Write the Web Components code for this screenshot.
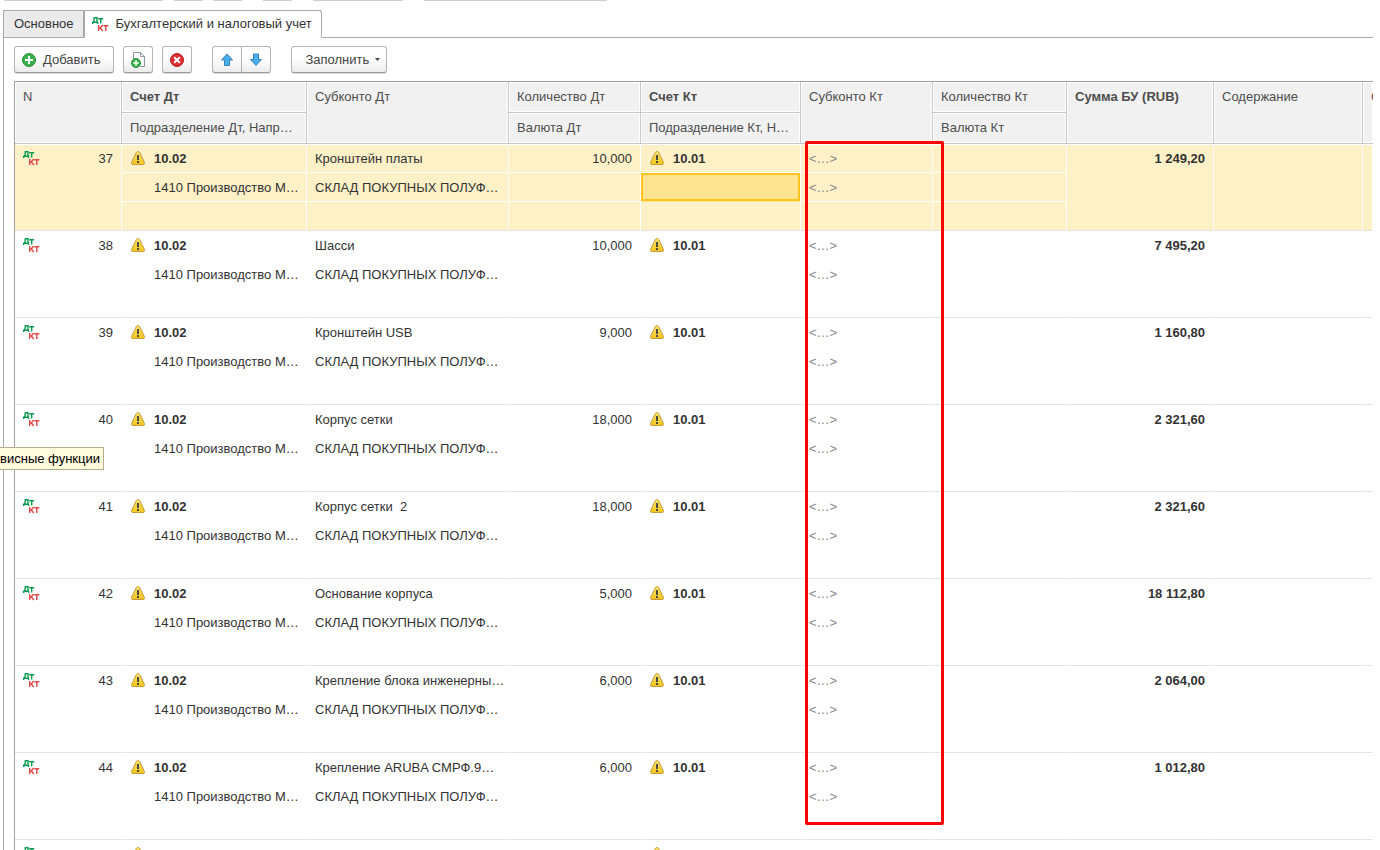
<!DOCTYPE html>
<html lang="ru">
<head>
<meta charset="utf-8">
<title>Бухгалтерский и налоговый учет</title>
<style>
  body {
    margin: 0;
    height: 100vh;
    overflow: hidden;
    background: #fff;
    color: #333;
    font: 13px/16px "Liberation Sans", Arial, sans-serif;
  }
</style>
</head>
<body>
<entry-window></entry-window>

<script>
class DtktIcon extends HTMLElement {
  constructor() {
    super();
    this.attachShadow({ mode: 'open' }).innerHTML = `
      <style>
        :host { display: block; width: 17px; height: 16px; white-space: normal; }
        svg { display: block; }
        path { fill: none; stroke-width: 1.4; }
        .dt { stroke: #0a9a50; }
        .kt { stroke: #e04848; }
      </style>
      <svg width="17" height="16" viewBox="0 0 17 16" aria-hidden="true">
        <path class="dt" d="M.7 8V6.3H5.6V8M1.5 6.3C2.2 5 2.3 3.5 2.3 1.7H5V6.3M6.2 2.7H11.2M8.7 2.7V7.5"/>
        <path class="kt" d="M6.7 9V15M7 12H8.3L10.6 9M8.3 12L10.8 15M11.3 9.7H16.3M13.8 9.7V15"/>
      </svg>`;
  }
}
customElements.define("dtkt-icon", DtktIcon);

class WarningIcon extends HTMLElement {
  constructor() {
    super();
    this.attachShadow({ mode: 'open' }).innerHTML = `
      <style>
        :host { display: block; width: 16px; height: 16px; white-space: normal; }
        svg { display: block; }
      </style>
      <svg width="16" height="16" viewBox="0 0 16 16" aria-hidden="true">
        <defs>
          <linearGradient id="g" x1="0" y1="0" x2="0" y2="1">
            <stop offset="0" stop-color="#fbe36a"/>
            <stop offset="1" stop-color="#f3c51d"/>
          </linearGradient>
        </defs>
        <path d="M8 1.5C9 1.5 9.500 2.1 9.900 3L14.300 12.200C14.900 13.700 14.300 14.500 13 14.500H3C1.700 14.500 1.100 13.700 1.700 12.200L6.100 3C6.500 2.100 7 1.500 8 1.500Z" fill="url(#g)" stroke="#c79a3c"/>
        <path d="M7 5H9V10H7ZM7 11H9V13H7Z" fill="#4a4a44"/>
      </svg>`;
  }
}
customElements.define("warning-icon", WarningIcon);

class ToolButton extends HTMLElement {
  constructor() {
    super();
    this.attachShadow({ mode: 'open' }).innerHTML = `
      <style>
        :host { display: block; }
        button {
          display: flex;
          align-items: center;
          justify-content: center;
          gap: 6px;
          height: 27px;
          min-width: 30px;
          padding: 0 6px;
          box-sizing: border-box;
          border: 1px solid #b4b4b4;
          border-bottom-color: #999;
          border-radius: var(--radius, 3px);
          background: linear-gradient(#fff 45%, #ececec);
          box-shadow: 0 1px 0 #dcdcdc;
          color: #444;
          font: inherit;
          white-space: nowrap;
        }
        :host([wide]) button { padding: 0 13px 0 6px; }
        :host([menu]) button { padding: 0 6px 0 13px; }
      </style>
      <button type="button"><slot></slot></button>`;
  }

  connectedCallback() {
    const label = this.getAttribute("label")
    if (label) this.shadowRoot.querySelector("button").setAttribute("aria-label", label)
  }
}
customElements.define("tool-button", ToolButton);

class TabBar extends HTMLElement {
  constructor() {
    super();
    this.attachShadow({ mode: 'open' }).innerHTML = `
      <style>
        :host {
          display: flex;
          height: 28px;
          box-sizing: border-box;
          box-shadow: inset 0 -1px 0 #aaa;
        }
        button {
          display: flex;
          align-items: center;
          gap: 7px;
          box-sizing: border-box;
          padding: 0 9px 0 10px;
          border: 1px solid #aaa;
          background: #ebebeb;
          color: #333;
          font: inherit;
          white-space: nowrap;
        }
        button:first-child { border-right: 0; border-radius: 3px 0 0 0; }
        button[aria-selected="true"] {
          padding-left: 7px;
          border-bottom-color: #fff;
          border-radius: 0 3px 0 0;
          background: #fff;
        }
      </style>
      <button type="button" role="tab">Основное</button>
      <button type="button" role="tab" aria-selected="true"><dtkt-icon></dtkt-icon>Бухгалтерский и налоговый учет</button>`;
  }

  connectedCallback() {
    this.setAttribute("role", "tablist")
  }
}
customElements.define("tab-bar", TabBar);

class EntryToolbar extends HTMLElement {
  constructor() {
    super();
    this.attachShadow({ mode: 'open' }).innerHTML = `
      <style>
        :host { display: flex; gap: 9px; padding: 8px 10px; }
        .pair { display: flex; margin: 0 11px; }
        .pair tool-button:first-child { --radius: 3px 0 0 3px; margin-right: -1px; }
        .pair tool-button:last-child { --radius: 0 3px 3px 0; }
        svg { display: block; flex: none; }
      </style>
      <tool-button wide>
        <svg width="16" height="16" viewBox="0 0 16 16" aria-hidden="true">
          <circle cx="8" cy="8" r="6.5" fill="#3db04b" stroke="#23903a"/>
          <path d="M8 4V12M4 8H12" stroke="#fff" stroke-width="2"/>
        </svg>
        Добавить
      </tool-button>
      <tool-button label="Добавить копированием">
        <svg width="16" height="16" viewBox="0 0 16 16" aria-hidden="true">
          <path d="M3.5 7V.5H10.5L14.5 4.5V14.5H10M10.5 .5V4.5H14.5" fill="#fff" stroke="#8a98a5"/>
          <circle cx="6" cy="11" r="4.5" fill="#3db04b" stroke="#23903a"/>
          <path d="M6 8.3V13.7M3.3 11H8.7" stroke="#fff" stroke-width="1.5"/>
        </svg>
      </tool-button>
      <tool-button label="Удалить">
        <svg width="16" height="16" viewBox="0 0 16 16" aria-hidden="true">
          <circle cx="8" cy="8" r="6.5" fill="#dc2f35" stroke="#bb1c22"/>
          <path d="M5.2 5.2L10.8 10.8M10.8 5.2L5.2 10.8" stroke="#fff" stroke-width="2"/>
        </svg>
      </tool-button>
      <div class="pair">
        <tool-button label="Переместить вверх">
          <svg width="16" height="16" viewBox="0 0 16 16" aria-hidden="true">
            <path d="M8 2L13.5 8H10.5V13.5H5.5V8H2.5Z" fill="#45b0ee" stroke="#3b82b4"/>
          </svg>
        </tool-button>
        <tool-button label="Переместить вниз">
          <svg width="16" height="16" viewBox="0 0 16 16" aria-hidden="true">
            <path d="M8 13.5L13.5 7.5H10.5V2H5.5V7.5H2.5Z" fill="#45b0ee" stroke="#3b82b4"/>
          </svg>
        </tool-button>
      </div>
      <tool-button menu>
        Заполнить
        <svg width="5" height="3" viewBox="0 0 5 3" aria-hidden="true"><path d="M0 0H5L2.5 3Z" fill="#444"/></svg>
      </tool-button>`;
  }
}
customElements.define("entry-toolbar", EntryToolbar);

class EntryTable extends HTMLElement {
  #shadow;
  #data;

  constructor() {
    super();
    this.#shadow = this.attachShadow({ mode: 'open' });
    this.#data = [];
    this.render()
  }

  set data(value) {
    this.#data = structuredClone(value)
    this.render()
  }

  get data() {
    return this.#data
  }

  entry(row) {
    return `
      <tbody class="${row.selected ? "selected" : ""}">
        <tr>
          <td rowspan="3"><div class="number"><dtkt-icon></dtkt-icon><span>${row.n}</span></div></td>
          <td><div class="account"><warning-icon></warning-icon><b>10.02</b></div></td>
          <td>${row.name}</td>
          <td class="right">${row.count}</td>
          <td><div class="account"><warning-icon></warning-icon><b>10.01</b></div></td>
          <td class="empty">&lt;…&gt;</td>
          <td></td>
          <td rowspan="3" class="right"><b>${row.sum}</b></td>
          <td rowspan="3"></td>
          <td rowspan="3"></td>
        </tr>
        <tr>
          <td class="sub">1410 Производство М…</td>
          <td>СКЛАД ПОКУПНЫХ ПОЛУФ…</td>
          <td></td>
          <td class="${row.selected ? "current" : ""}"></td>
          <td class="empty">&lt;…&gt;</td>
          <td></td>
        </tr>
        <tr><td></td><td></td><td></td><td></td><td></td><td></td></tr>
      </tbody>`
  }

  render() {
    this.#shadow.innerHTML = `
      <style>
        :host { display: block; position: relative; border: solid #a0a0a0; border-width: 1px 0 0 1px; }
        table {
          width: 100%;
          table-layout: fixed;
          border-collapse: separate;
          border-spacing: 0;
        }
        th, td {
          box-sizing: border-box;
          padding: 7px 8px 5px;
          overflow: hidden;
          text-align: left;
          vertical-align: top;
          white-space: pre;
        }
        th {
          height: 31px;
          border: solid #c8c8c8;
          border-width: 0 1px 1px 0;
          background: #f1f1f1;
          box-shadow: inset 0 0 0 1px #fff;
          color: #4d4d4d;
          font-weight: normal;
        }
        th.key { font-weight: bold; }
        th.last { border-right: 0; padding-right: 0; }
        td { height: 29px; border: solid transparent; border-width: 0 1px 1px 0; }
        td[rowspan], tr:last-child td { border-bottom-color: #e4e4e4; }
        .selected td {
          border-right-color: #fff;
          background: #fef1c7;
          background-clip: padding-box;
        }
        .selected tr:first-child td { box-shadow: inset 0 1px 0 #fff; }
        .selected .current {
          background: #fee491;
          box-shadow: inset 0 0 0 2px #fdc41f;
        }
        .right { text-align: right; }
        .sub { padding-left: 32px; }
        .empty { color: #888; }
        .number { display: flex; justify-content: space-between; }
        .account { display: flex; gap: 8px; }
        dtkt-icon, warning-icon { margin-top: -1px; }
        .mark {
          position: absolute;
          top: 59px;
          left: 790px;
          width: 139px;
          height: 684px;
          box-sizing: border-box;
          border: 3px solid #f00;
          border-radius: 2px;
        }
      </style>
      <table>
        <colgroup>
          <col style="width:107px"><col style="width:185px"><col style="width:202px">
          <col style="width:132px"><col style="width:160px"><col style="width:132px">
          <col style="width:134px"><col style="width:147px"><col style="width:149px"><col>
        </colgroup>
        <thead>
          <tr>
            <th rowspan="2">N</th>
            <th class="key">Счет Дт</th>
            <th rowspan="2">Субконто Дт</th>
            <th>Количество Дт</th>
            <th class="key">Счет Кт</th>
            <th rowspan="2">Субконто Кт</th>
            <th>Количество Кт</th>
            <th rowspan="2" class="key">Сумма БУ (RUB)</th>
            <th rowspan="2">Содержание</th>
            <th rowspan="2" class="last">С</th>
          </tr>
          <tr>
            <th>Подразделение Дт, Напр…</th>
            <th>Валюта Дт</th>
            <th>Подразделение Кт, Н…</th>
            <th>Валюта Кт</th>
          </tr>
        </thead>
        ${this.#data.map(row => this.entry(row)).join("")}
      </table>
      <div class="mark"></div>`;
  }
}
customElements.define("entry-table", EntryTable);

class HintBox extends HTMLElement {
  constructor() {
    super();
    this.attachShadow({ mode: 'open' }).innerHTML = `
      <style>
        :host {
          display: block;
          box-sizing: border-box;
          padding: 3px 3px 2px;
          border: 1px solid #b5ad8b;
          background: #fffbdc;
          color: #000;
          white-space: nowrap;
        }
      </style>
      <slot></slot>`;
  }

  connectedCallback() {
    this.setAttribute("role", "tooltip")
  }
}
customElements.define("hint-box", HintBox);

class EntryWindow extends HTMLElement {
  constructor() {
    super();
    this.attachShadow({ mode: 'open' }).innerHTML = `
      <style>
        :host { display: block; position: relative; height: 100vh; overflow: hidden; }
        .commands { display: flex; height: 1px; margin-bottom: 9px; padding-left: 4px; }
        .commands i { background: #cfcfcf; }
        main { margin: 0 7px 0 3px; }
        .page { border-left: 1px solid #aaa; }
        entry-table { margin-left: 10px; }
        hint-box { position: absolute; top: 447px; right: calc(100% - 104px); }
      </style>
      <div class="commands">
        <i style="width:159px"></i>
        <i style="width:29px;margin-left:11px"></i>
        <i style="width:29px;margin-left:10px"></i>
        <i style="width:29px;margin-left:21px"></i>
        <i style="width:90px;margin-left:21px"></i>
        <i style="width:183px;margin-left:21px"></i>
      </div>
      <main>
        <tab-bar></tab-bar>
        <div class="page">
          <entry-toolbar></entry-toolbar>
          <entry-table></entry-table>
        </div>
      </main>
      <hint-box>Сервисные функции</hint-box>`;
    this.shadowRoot.querySelector("entry-table").data = [
      { n: 37, name: "Кронштейн платы", count: "10,000", sum: "1 249,20", selected: true },
      { n: 38, name: "Шасси", count: "10,000", sum: "7 495,20" },
      { n: 39, name: "Кронштейн USB", count: "9,000", sum: "1 160,80" },
      { n: 40, name: "Корпус сетки", count: "18,000", sum: "2 321,60" },
      { n: 41, name: "Корпус сетки  2", count: "18,000", sum: "2 321,60" },
      { n: 42, name: "Основание корпуса", count: "5,000", sum: "18 112,80" },
      { n: 43, name: "Крепление блока инженерны…", count: "6,000", sum: "2 064,00" },
      { n: 44, name: "Крепление ARUBA СМРФ.9…", count: "6,000", sum: "1 012,80" },
      { n: 45, name: "Корп. НПП СМРФ.218001.0…", count: "8,000", sum: "2 026,80" },
    ]
  }
}
customElements.define("entry-window", EntryWindow);
</script>
</body>
</html>
